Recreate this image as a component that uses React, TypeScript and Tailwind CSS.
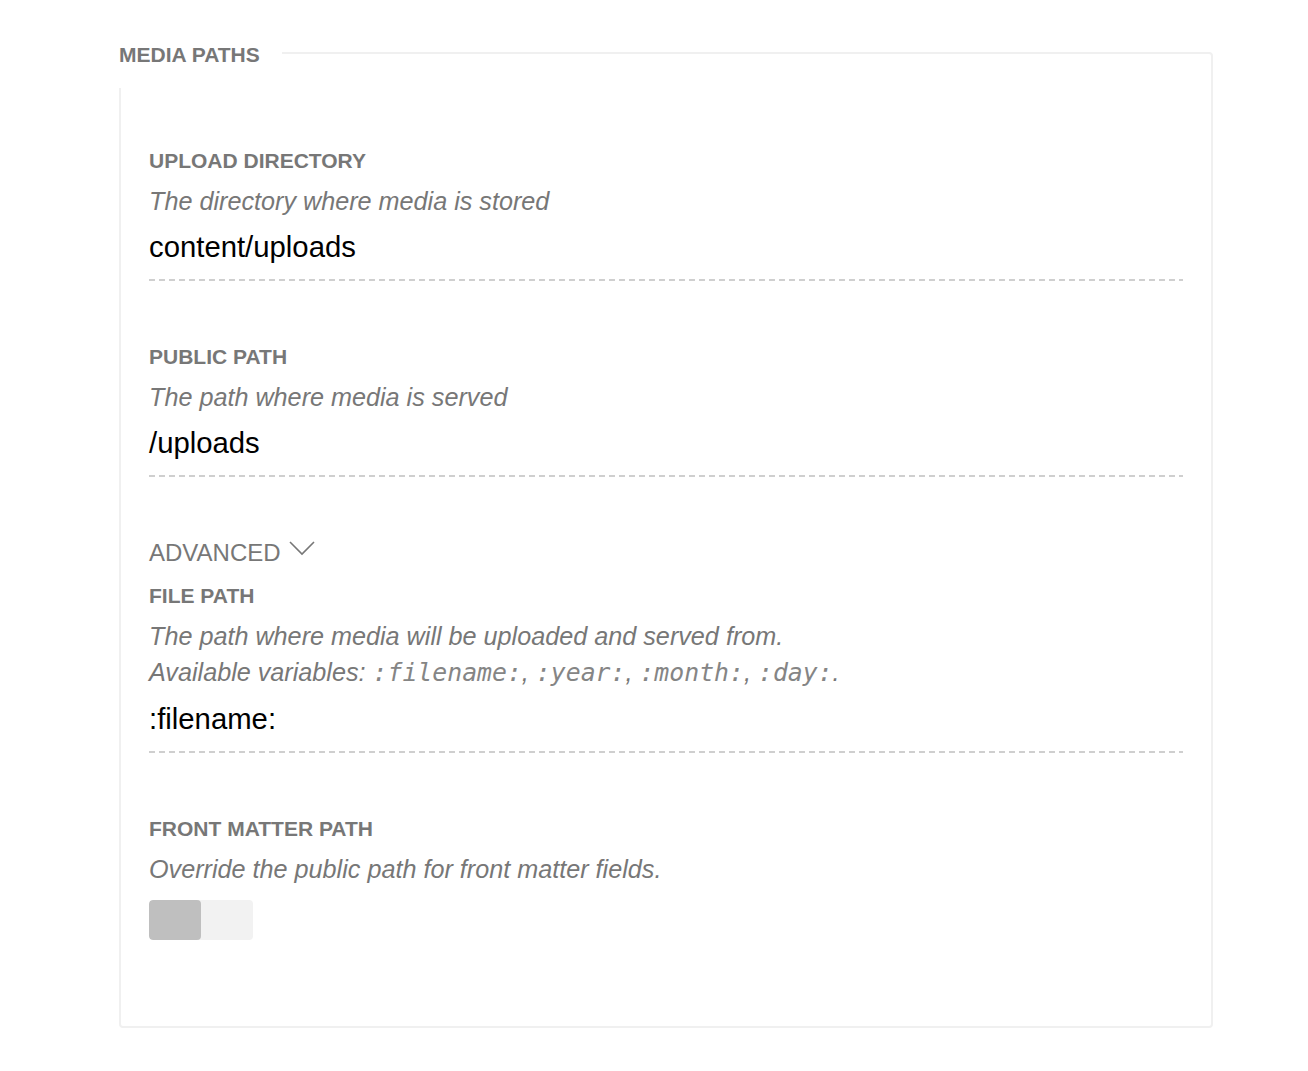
const font = { fontFamily: '"Liberation Sans", Arial, sans-serif' };

const Label = ({ children }: { children: React.ReactNode }) => (
  <div className="text-[21px] leading-[28px] font-bold uppercase text-[#777]">{children}</div>
);

const Desc = ({ children }: { children: React.ReactNode }) => (
  <div className="mt-2 text-[25.2px] leading-[36px] italic text-[#777]">{children}</div>
);

const Value = ({ value }: { value: string }) => (
  <div className="mt-2">
    <div className="text-[29.3px] leading-[40px] text-black pb-3">{value}</div>
    <div className="h-[2px] bg-[repeating-linear-gradient(90deg,#cfcfcf_0_6px,transparent_6px_10px)]" />
  </div>
);

const Mono = ({ children }: { children: React.ReactNode }) => (
  <code className="font-['DejaVu_Sans_Mono',monospace] italic text-[24.8px] text-[#858585]">{children}</code>
);

export default function App() {
  return (
    <div className="bg-white min-h-[1071px] pt-[18px]" style={font}>
      <fieldset className="ml-[119px] w-[1094px] border-2 border-[#f0f0f0] rounded-[4px] px-[28px] pt-[59px] pb-[86px]">
        <legend className="-ml-[30px] bg-white pt-[25px] pb-[21px] pr-[22px] text-[21px] leading-[24px] font-bold uppercase text-[#777]">
          Media Paths
        </legend>

        {/* UPLOAD DIRECTORY */}
        <div>
          <Label>Upload directory</Label>
          <Desc>The directory where media is stored</Desc>
          <Value value="content/uploads" />
        </div>

        {/* PUBLIC PATH */}
        <div className="mt-[62px]">
          <Label>Public path</Label>
          <Desc>The path where media is served</Desc>
          <Value value="/uploads" />
        </div>

        {/* ADVANCED */}
        <div className="mt-[60px] flex items-center gap-[8px] text-[24px] leading-[32px] uppercase text-[#777]">
          <span>Advanced</span>
          <svg width="26" height="16" viewBox="0 0 26 16" fill="none" className="-mt-[10px]">
            <path d="M1 2 L13 14 L25 2" stroke="#777" strokeWidth="1.6" />
          </svg>
        </div>

        {/* FILE PATH */}
        <div className="mt-[13px]">
          <Label>File path</Label>
          <Desc>
            The path where media will be uploaded and served from.
            <br />
            Available variables: <Mono>:filename:</Mono>, <Mono>:year:</Mono>, <Mono>:month:</Mono>,{" "}
            <Mono>:day:</Mono>.
          </Desc>
          <Value value=":filename:" />
        </div>

        {/* FRONT MATTER PATH */}
        <div className="mt-[62px]">
          <Label>Front matter path</Label>
          <Desc>Override the public path for front matter fields.</Desc>
          <div className="mt-[13px] flex w-[104px] h-[40px] rounded-[4px] bg-[#f2f2f2] overflow-hidden">
            <div className="w-[52px] h-full rounded-[4px] bg-[#bfbfbf]" />
          </div>
        </div>
      </fieldset>
    </div>
  );
}
